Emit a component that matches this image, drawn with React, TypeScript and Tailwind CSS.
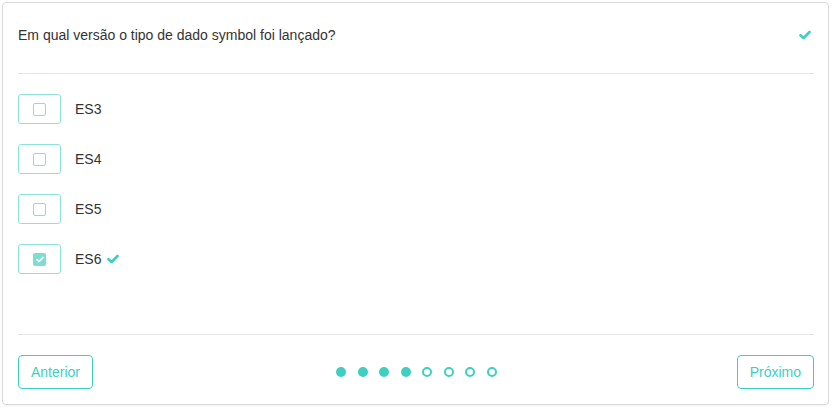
import React from 'react';

const Check = ({ className = '' }: { className?: string }) => (
  <svg viewBox="0 0 12 10" className={className} fill="none">
    <path d="M1.5 5.2 L4.6 8 L10.5 2" stroke="currentColor" strokeWidth="2.6" strokeLinecap="round" strokeLinejoin="round" />
  </svg>
);

const options = [
  { label: 'ES3', checked: false },
  { label: 'ES4', checked: false },
  { label: 'ES5', checked: false },
  { label: 'ES6', checked: true },
];

const App = () => {
  return (
    <div className="p-[2px] bg-white" style={{ fontFamily: '"Liberation Sans", Arial, sans-serif' }}>
      <div className="w-[827px] h-[403px] bg-white border border-[#dcdcdc] rounded-[4px] shadow-[0_1px_2px_rgba(0,0,0,0.06)] pl-[15px] pr-[14px] flex flex-col">
        <div className="h-[71px] pt-[24px] flex items-start justify-between border-b border-[#e6e6e6] shrink-0">
          <span className="text-[14px] leading-[16px] text-[#333]">Em qual versão o tipo de dado symbol foi lançado?</span>
          <Check className="w-[12px] h-[10px] mt-[3px] mr-[3px] text-[#3fcfc1]" />
        </div>

        <div className="flex-1 flex flex-col gap-5 pt-5">
          {options.map((o) => (
            <div key={o.label} className="flex items-center gap-[14px]">
              <div className="w-[43px] h-[30px] border border-[#8be2d9] rounded-[3px] flex items-center justify-center">
                {o.checked ? (
                  <div className="w-[13px] h-[13px] rounded-[2px] bg-[#7fdcd2] flex items-center justify-center">
                    <Check className="w-[8px] h-[7px] text-white" />
                  </div>
                ) : (
                  <div className="w-[13px] h-[13px] rounded-[2px] border-[1.5px] border-[#85e0d7]" />
                )}
              </div>
              <span className="text-[14px] text-[#333] flex items-center gap-[6px]">
                {o.label}
                {o.checked && <Check className="w-[12px] h-[10px] text-[#3fcfc1]" />}
              </span>
            </div>
          ))}
        </div>

        <div className="border-t border-[#e6e6e6] pt-5 pb-[15px] flex items-center justify-between shrink-0">
          <button className="h-[34px] px-3 border border-[#3fcfc1] rounded-[4px] text-[14px] text-[#3fcfc1] bg-white">
            Anterior
          </button>
          <div className="flex items-center gap-[11.5px] ml-[3px]">
            {[0, 1, 2, 3, 4, 5, 6, 7].map((i) =>
              i < 4 ? (
                <span key={i} className="w-[10px] h-[10px] rounded-full bg-[#3fcfc1]" />
              ) : (
                <span key={i} className="w-[10px] h-[10px] rounded-full border-2 border-[#3fcfc1]" />
              )
            )}
          </div>
          <button className="h-[34px] px-3 border border-[#3fcfc1] rounded-[4px] text-[14px] text-[#3fcfc1] bg-white">
            Próximo
          </button>
        </div>
      </div>
    </div>
  );
};

export default App;
